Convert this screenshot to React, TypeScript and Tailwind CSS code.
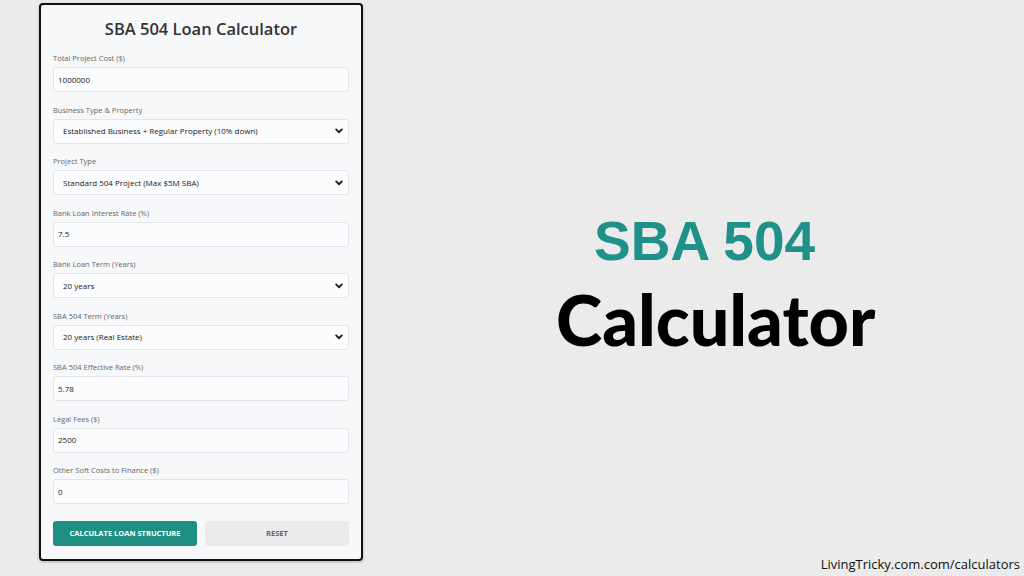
const fields: { label: string; value: string; select?: boolean }[] = [
  { label: 'Total Project Cost ($)', value: '1000000' },
  { label: 'Business Type & Property', value: 'Established Business + Regular Property (10% down)', select: true },
  { label: 'Project Type', value: 'Standard 504 Project (Max $5M SBA)', select: true },
  { label: 'Bank Loan Interest Rate (%)', value: '7.5' },
  { label: 'Bank Loan Term (Years)', value: '20 years', select: true },
  { label: 'SBA 504 Term (Years)', value: '20 years (Real Estate)', select: true },
  { label: 'SBA 504 Effective Rate (%)', value: '5.78' },
  { label: 'Legal Fees ($)', value: '2500' },
  { label: 'Other Soft Costs to Finance ($)', value: '0' },
]

function Chevron() {
  return (
    <svg width="8" height="6" viewBox="0 0 10 7" className="shrink-0">
      <path d="M1.5 1.5l3.5 3.5 3.5-3.5" fill="none" stroke="#222" strokeWidth="2.4" strokeLinecap="round" strokeLinejoin="round" />
    </svg>
  )
}

function Field({ label, value, select }: { label: string; value: string; select?: boolean }) {
  return (
    <div className="flex flex-col">
      <span className="text-[7.5px] leading-[10px] text-[#666]">{label}</span>
      <div
        className={`mt-[4px] h-[25px] flex items-center justify-between rounded-[3px] border border-[#e3e5e8] bg-[#fbfcfd] ${
          select ? 'pl-[9px] pr-[5px]' : 'pl-[4px]'
        }`}
      >
        <span className="text-[8px] text-[#222]">{value}</span>
        {select && <Chevron />}
      </div>
    </div>
  )
}

export default function App() {
  return (
    <div
      className="w-[1024px] h-[576px] bg-[#ebebeb] flex relative overflow-hidden"
      style={{ fontFamily: '"Open Sans", "Noto Sans", sans-serif' }}
    >
      <div className="ml-[39px] mt-[3px] w-[324px] h-[558px] border-2 border-[#111] rounded-[4px] bg-[#f7f8fa] shadow-[0_1px_3px_rgba(0,0,0,0.25)] px-[12px] flex flex-col">
        <h1 className="text-center text-[16.5px] font-semibold text-[#333] leading-[22px] mt-[13px] mb-[13px]">
          SBA 504 Loan Calculator
        </h1>
        <div className="flex flex-col gap-[12.5px]">
          {fields.map((f) => (
            <Field key={f.label} {...f} />
          ))}
        </div>
        <div className="flex gap-[8px] mt-[17px]">
          <button className="flex-1 h-[25px] rounded-[3px] bg-[#1f8f84] text-white text-[7.5px] font-bold uppercase">
            Calculate Loan Structure
          </button>
          <button className="flex-1 h-[25px] rounded-[3px] bg-[#ebebeb] text-[#666] text-[7.5px] font-bold uppercase">
            Reset
          </button>
        </div>
      </div>

      <div className="flex-1 flex flex-col items-start pt-[214px] pl-[193px]">
        <div
          className="text-[55px] font-bold text-[#1f9189] leading-none ml-[38px]"
          style={{ fontFamily: '"Liberation Sans", Arial, sans-serif' }}
        >
          SBA 504
        </div>
        <div
          className="text-[70px] font-black text-black leading-none mt-[15px]"
          style={{ fontFamily: 'Lato, sans-serif' }}
        >
          Calculator
        </div>
      </div>

      <div className="absolute right-[4px] bottom-[2px] text-[13px] text-[#111]">
        LivingTricky.com.com/calculators
      </div>
    </div>
  )
}
